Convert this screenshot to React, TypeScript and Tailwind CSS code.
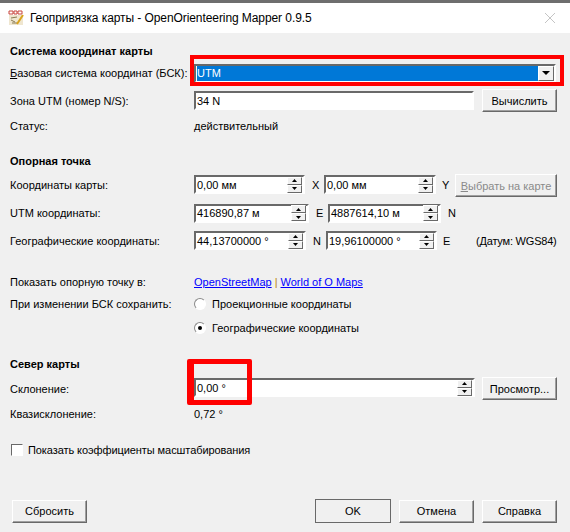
import type { ReactNode } from "react";

const font = { fontFamily: '"Liberation Sans", Arial, sans-serif' };

// one form row, label column then controls
const Row = ({ label, className, children }: { label?: ReactNode; className: string; children?: ReactNode }) => (
  <div className={`flex items-center whitespace-nowrap ${className}`}>
    <div className="w-[184px] shrink-0">{label}</div>
    {children}
  </div>
);

const Btn = ({ children, className, disabled, isDefault }: { children: ReactNode; className: string; disabled?: boolean; isDefault?: boolean }) => (
  <div
    className={`flex shrink-0 items-center justify-center whitespace-nowrap border ${isDefault ? "border-[#696969]" : "border-t-white border-l-white border-r-[#696969] border-b-[#696969] shadow-[inset_-1px_-1px_0_#a0a0a0]"} ${disabled ? "text-[#8a8a8a]" : ""} ${className}`}
  >
    {children}
  </div>
);

const SpinArrow = ({ up }: { up?: boolean }) => (
  <div className="flex h-[8px] w-full items-center justify-center border border-t-white border-l-white border-r-[#696969] border-b-[#696969] bg-[#f0f0f0]">
    <svg width="5" height="3" viewBox="0 0 5 3">
      <path d={up ? "M2.5 0 L5 3 L0 3 Z" : "M0 0 L5 0 L2.5 3 Z"} fill="#000" />
    </svg>
  </div>
);

const Spin = ({ value, className }: { value: string; className: string }) => (
  <div className={`flex h-[19px] shrink-0 items-center justify-between border-2 border-t-[#696969] border-l-[#696969] border-r-white border-b-white bg-white pl-px pr-px ${className}`}>
    <span className="whitespace-nowrap">{value}</span>
    <div className="flex w-[15px] flex-col">
      <SpinArrow up />
      <SpinArrow />
    </div>
  </div>
);

const App = () => {
  return (
    <div className="relative h-[532px] w-[570px] overflow-hidden bg-[#f0f0f0] text-[11px] leading-[16px] text-black" style={font}>
      <div className="h-[3px] bg-[#6e6e6e]" />
      <div className="flex h-[30px] items-center bg-white pl-[8px] text-[12px]">
        <svg width="16" height="16" viewBox="0 0 16 16" className="mr-[6px]">
          <rect x="1" y="5" width="14" height="10" fill="#efe6d0" />
          <path d="M3 8 L9 7 M3 10 L7 12 M4 13 L9 13" stroke="#8a7a50" strokeWidth="1" />
          <path d="M9 14 L15 5" stroke="#d9a21c" strokeWidth="2" />
          <path d="M1 1 H5 V4 H1 Z M6 1 H9 V4 H6 Z M10 1 H14 V4 H10 Z" fill="none" stroke="#c8443c" strokeWidth="1" />
        </svg>
        <span className="whitespace-nowrap tracking-[-0.08px]">Геопривязка карты - OpenOrienteering Mapper 0.9.5</span>
        <svg width="12" height="12" viewBox="0 0 12 12" className="ml-auto mr-[14px]">
          <path d="M1 1 L11 11 M11 1 L1 11" stroke="#c4c4c4" strokeWidth="1" />
        </svg>
      </div>

      <div className="pl-[10px]">
        <div className="mt-[10px] h-[16px] font-bold">Система координат карты</div>
        <Row className="mt-[4px] h-[20px]" label={<span><u>Б</u>азовая система координат (БСК):</span>}>
          <div className="flex h-[19px] w-[362px] items-center border-2 border-t-[#696969] border-l-[#696969] border-r-white border-b-white bg-white pl-px">
            <div className="h-[15px] flex-1 bg-[#0078d7] leading-[15px] text-white">UTM</div>
            <div className="flex h-[15px] w-[16px] items-center justify-center border border-t-white border-l-white border-r-[#696969] border-b-[#696969] bg-[#f0f0f0]">
              <svg width="8" height="4" viewBox="0 0 8 4">
                <path d="M0 0 L8 0 L4 4 Z" fill="#000" />
              </svg>
            </div>
          </div>
        </Row>
        <Row className="mt-[7px] h-[21px]" label="Зона UTM (номер N/S):">
          <div className="flex h-[19px] w-[280px] items-center border-2 border-t-[#696969] border-l-[#696969] border-r-white border-b-white bg-white pl-px">34 N</div>
          <Btn className="ml-[8px] h-[23px] w-[75px]">Вычислить</Btn>
        </Row>
        <Row className="mt-[5px] h-[20px]" label="Статус:">
          действительный
        </Row>

        <div className="mt-[17px] h-[16px] font-bold">Опорная точка</div>
        <Row className="mt-[4px] h-[23px]" label="Координаты карты:">
          <Spin value="0,00 мм" className="w-[111px]" />
          <span className="ml-[7px] w-[12px]">X</span>
          <Spin value="0,00 мм" className="w-[112px]" />
          <span className="ml-[6px] w-[13px]">Y</span>
          <Btn disabled className="mt-[2px] h-[23px] w-[102px]"><span><u>В</u>ыбрать на карте</span></Btn>
        </Row>
        <Row className="mt-[7px] h-[20px]" label="UTM координаты:">
          <Spin value="416890,87 м" className="w-[115px]" />
          <span className="ml-[7px] w-[12px]">E</span>
          <Spin value="4887614,10 м" className="w-[113px]" />
          <span className="ml-[7px]">N</span>
        </Row>
        <Row className="mt-[8px] h-[19px]" label="Географические координаты:">
          <Spin value="44,13700000 °" className="w-[112px]" />
          <span className="ml-[7px] w-[13px]">N</span>
          <Spin value="19,96100000 °" className="w-[111px]" />
          <span className="ml-[6px] w-[33px]">E</span>
          <span className="whitespace-nowrap tracking-[-0.2px]">(Датум: WGS84)</span>
        </Row>

        <Row className="mt-[22px] h-[20px]" label="Показать опорную точку в:">
          <span className="text-[#0000ff] underline">OpenStreetMap</span>
          <span className="mx-[3px] text-[#b8860b]">|</span>
          <span className="text-[#0000ff] underline">World of O Maps</span>
        </Row>
        <Row className="mt-[2px] h-[20px]" label="При изменении БСК сохранить:">
          <div className="mr-[6px] h-[12px] w-[12px] rounded-full border border-t-[#8a8a8a] border-l-[#8a8a8a] border-r-white border-b-white bg-white" />
          Проекционные координаты
        </Row>
        <Row className="mt-[4px] h-[20px]">
          <div className="mr-[6px] flex h-[12px] w-[12px] items-center justify-center rounded-full border border-t-[#8a8a8a] border-l-[#8a8a8a] border-r-white border-b-white bg-white">
            <div className="h-[4px] w-[4px] rounded-full bg-black" />
          </div>
          Географические координаты
        </Row>

        <div className="mt-[18px] h-[16px] font-bold">Север карты</div>
        <Row className="mt-[5px] h-[23px]" label="Склонение:">
          <Spin value="0,00 °" className="mb-[2px] w-[281px]" />
          <Btn className="ml-[7px] h-[23px] w-[75px]">Просмотр...</Btn>
        </Row>
        <Row className="mt-[4px] h-[20px]" label="Квазисклонение:">
          0,72 °
        </Row>
        <div className="mt-[16px] flex h-[20px] items-center pl-px">
          <div className="mr-[5px] h-[12px] w-[12px] border border-t-[#696969] border-l-[#696969] border-r-white border-b-white bg-white" />
          <span className="tracking-[-0.08px]">Показать коэффициенты масштабирования</span>
        </div>

        <div className="mt-[39px] flex items-center pl-[2px]">
          <Btn className="h-[23px] w-[75px]">Сбросить</Btn>
          <Btn isDefault className="ml-[228px] h-[24px] w-[76px]">OK</Btn>
          <Btn className="ml-[8px] h-[23px] w-[75px]">Отмена</Btn>
          <Btn className="ml-[8px] h-[23px] w-[75px]">Справка</Btn>
        </div>
      </div>

      {/* red annotation frames drawn over the dialog */}
      <div className="absolute left-[190px] top-[55px] h-[31px] w-[374px] border-4 border-[#ff0000]" />
      <div className="absolute left-[187px] top-[359px] h-[46px] w-[65px] rounded-[2px] border-[5px] border-l-[7px] border-[#ff0000]" />
    </div>
  );
};

export default App;
